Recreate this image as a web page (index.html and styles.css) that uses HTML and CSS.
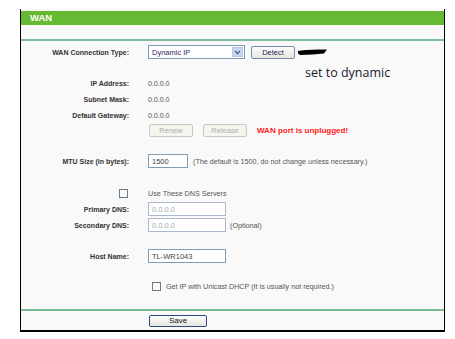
FILE: index.html
```html
<!DOCTYPE html>
<html>
<head>
<meta charset="utf-8">
<link rel="stylesheet" href="styles.css">
</head>
<body>
<div class="frame">
  <div class="title">WAN</div>
  <div class="top-space"></div>
  <div class="content">
    <div class="row r-type">
      <div class="label">WAN Connection Type:</div>
      <div class="cell">
        <div class="select"><span class="sel-text">Dynamic IP</span><span class="sel-arrow"><svg width="7" height="5" viewBox="0 0 7 5"><path d="M1 1 L3.5 3.5 L6 1" fill="none" stroke="#4d6185" stroke-width="1.3"/></svg></span></div>
        <div class="btn detect">Detect</div>
        <svg class="scribble" width="31" height="8" viewBox="0 0 31 8"><path d="M1 3 Q8 1 30 1.5 L27 5.5 Q16 6.5 3 7 L1 5.5 Z" fill="#000"/></svg>
      </div>
    </div>
    <div class="note">set to dynamic</div>
    <div class="sp15"></div>
    <div class="row"><div class="label">IP Address:</div><div class="cell value">0.0.0.0</div></div>
    <div class="row"><div class="label">Subnet Mask:</div><div class="cell value">0.0.0.0</div></div>
    <div class="row"><div class="label">Default Gateway:</div><div class="cell value">0.0.0.0</div></div>
    <div class="row r-btns">
      <div class="label"></div>
      <div class="cell">
        <div class="btn disabled renew">Renew</div>
        <div class="btn disabled release">Release</div>
        <span class="warn">WAN port is unplugged!</span>
      </div>
    </div>
    <div class="sp15"></div>
    <div class="row">
      <div class="label">MTU Size (in bytes):</div>
      <div class="cell"><div class="input mtu">1500</div><span class="hint">(The default is 1500, do not change unless necessary.)</span></div>
    </div>
    <div class="sp17"></div>
    <div class="row r-dns">
      <div class="label"><span class="check"></span></div>
      <div class="cell hint">Use These DNS Servers</div>
    </div>
    <div class="row">
      <div class="label">Primary DNS:</div>
      <div class="cell"><div class="input wide dis">0.0.0.0</div></div>
    </div>
    <div class="row">
      <div class="label">Secondary DNS:</div>
      <div class="cell"><div class="input wide dis">0.0.0.0</div><span class="hint opt">(Optional)</span></div>
    </div>
    <div class="sp15"></div>
    <div class="row">
      <div class="label">Host Name:</div>
      <div class="cell"><div class="input wide">TL-WR1043</div></div>
    </div>
    <div class="sp14"></div>
    <div class="row">
      <div class="label"></div>
      <div class="cell"><span class="check uni"></span><span class="hint">Get IP with Unicast DHCP (It is usually not required.)</span></div>
    </div>
  </div>
  <div class="footer">
    <div class="btn save">Save</div>
  </div>
</div>
</body>
</html>
```

FILE: styles.css
```css
html, body {
  margin: 0;
  padding: 0;
  background: #ffffff;
}
body {
  font-family: "Liberation Sans", Arial, sans-serif;
  font-size: 7px;
  color: #333;
}
.frame {
  margin: 9px 0 0 20px;
  width: 423px;
  border-left: 1px solid #000;
  border-right: 1px solid #000;
  border-bottom: 2px solid #000;
  background: #f9f9f9;
  padding-top: 2px;
}
.title {
  height: 14px;
  background: #66b933;
  color: #fff;
  font-weight: bold;
  font-size: 9.5px;
  line-height: 14px;
  padding-left: 9px;
}
.top-space {
  height: 14px;
  border-bottom: 2px solid #7cbb98;
}
.content {
  position: relative;
  padding-top: 3px;
  height: 265px;
  border-bottom: 2px solid #7cbb98;
}
.row {
  display: grid;
  grid-template-columns: 108px 1fr;
  column-gap: 19px;
  align-items: center;
  height: 16px;
}
.r-btns { height: 15px; }
.r-dns { height: 15px; }
.label {
  text-align: right;
  font-weight: bold;
  color: #333;
  display: flex;
  justify-content: flex-end;
  align-items: center;
}
.cell {
  display: flex;
  align-items: center;
}
.value { color: #555; }
.sp14 { height: 14px; }
.sp15 { height: 15px; }
.sp17 { height: 17px; }
.select {
  width: 95px;
  height: 12px;
  border: 1px solid #7f9db9;
  background: #fff;
  display: flex;
  align-items: center;
  justify-content: space-between;
}
.sel-text {
  color: #3a1a6a;
  font-size: 7.5px;
  padding-left: 3px;
}
.sel-arrow {
  width: 11px;
  height: 10px;
  margin-right: 1px;
  background: #c6d6f5;
  border: 1px solid #b8c8ea;
  display: flex;
  align-items: center;
  justify-content: center;
  box-sizing: border-box;
}
.btn {
  height: 11px;
  border: 1px solid #7a8aa8;
  border-radius: 2px;
  background: linear-gradient(#fdfdfd, #e6e6e0);
  display: flex;
  align-items: center;
  justify-content: center;
  font-size: 7.5px;
  color: #2a1a5a;
}
.detect {
  width: 42px;
  margin-left: 6px;
}
.scribble {
  margin-left: 2px;
  margin-top: -1px;
}
.note {
  position: absolute;
  left: 284px;
  top: 23px;
  font-family: "Open Sans", "Liberation Sans", sans-serif;
  font-size: 12.5px;
  color: #1a1a2e;
}
.disabled {
  border-color: #c9c9bf;
  color: #b0b0a8;
  background: #f5f5f0;
}
.renew { width: 42px; margin-left: 1px; }
.release { width: 42px; margin-left: 10px; }
.warn {
  color: #ff2020;
  font-weight: bold;
  font-size: 8px;
  margin-left: 10px;
}
.input {
  height: 12px;
  border: 1px solid #7f9db9;
  background: #fff;
  color: #444;
  font-size: 7.5px;
  padding-left: 3px;
  display: flex;
  align-items: center;
  box-sizing: content-box;
}
.mtu { width: 35px; }
.wide { width: 73px; }
.dis { color: #aaa; border-color: #a9b8cc; }
.hint {
  color: #555;
  font-size: 7.2px;
  margin-left: 5px;
}
.r-dns .hint { margin-left: 0; }
.opt { margin-left: 4px; }
.check {
  display: inline-block;
  width: 7px;
  height: 7px;
  border: 1px solid #6a7a8a;
  background: #fafafa;
  margin-right: 1px;
}
.check.uni { margin-left: 4px; margin-right: 0; }
.footer {
  height: 19px;
  display: flex;
  align-items: center;
  padding-left: 128px;
}
.save {
  width: 56px;
  height: 10px;
  border: 1px solid #2a4a8a;
  color: #111;
  font-size: 8px;
}
```
